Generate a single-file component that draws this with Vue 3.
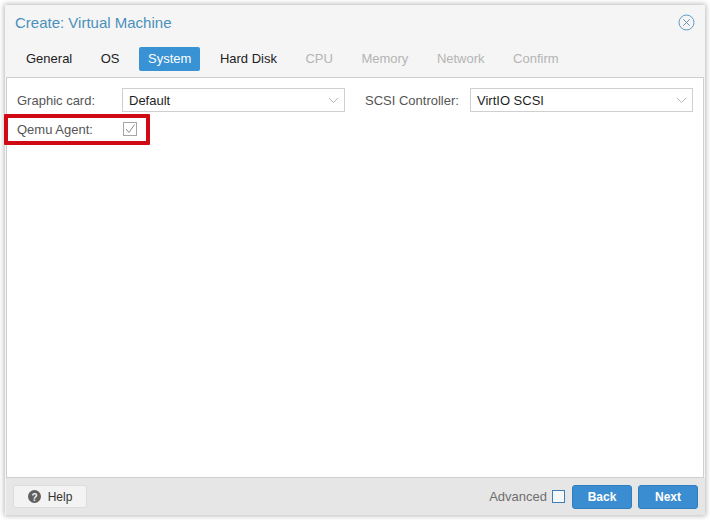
<script setup>
const tabs = [
  { label: 'General' },
  { label: 'OS' },
  { label: 'System', active: true },
  { label: 'Hard Disk' },
  { label: 'CPU', disabled: true },
  { label: 'Memory', disabled: true },
  { label: 'Network', disabled: true },
  { label: 'Confirm', disabled: true }
]
</script>

<template>
  <div class="page">
    <div class="window">
      <header class="head">
        <span class="title">Create: Virtual Machine</span>
        <svg class="close" width="17" height="17" viewBox="0 0 17 17" fill="none" stroke="#5b9bc4" stroke-width="1">
          <circle cx="8.5" cy="8.5" r="7.5" />
          <path d="M5.3 5.3l6.4 6.4M11.7 5.3l-6.4 6.4" stroke="#6f93ad" />
        </svg>
      </header>
      <nav class="tabs">
        <span
          v-for="t in tabs"
          :key="t.label"
          class="tab"
          :class="{ active: t.active, disabled: t.disabled }"
        >{{ t.label }}</span>
      </nav>
      <main class="panel">
        <div class="row">
          <div class="field">
            <label class="lbl">Graphic card:</label>
            <div class="select">
              <span>Default</span>
              <svg width="11" height="7" viewBox="0 0 11 7" fill="none" stroke="#b5b5b5"><path d="M1 1l4.5 4.5L10 1" /></svg>
            </div>
          </div>
          <div class="field">
            <label class="lbl">SCSI Controller:</label>
            <div class="select">
              <span>VirtIO SCSI</span>
              <svg width="11" height="7" viewBox="0 0 11 7" fill="none" stroke="#b5b5b5"><path d="M1 1l4.5 4.5L10 1" /></svg>
            </div>
          </div>
        </div>
        <div class="agent">
          <label class="lbl">Qemu Agent:</label>
          <span class="check">
            <svg width="12" height="12" viewBox="0 0 12 12" fill="none" stroke="#8f8f8f" stroke-width="1"><path d="M2 6l3 3.5 5.5-8" /></svg>
          </span>
        </div>
      </main>
      <footer class="foot">
        <button class="help">
          <svg width="13" height="13" viewBox="0 0 13 13">
            <circle cx="6.5" cy="6.5" r="6.5" fill="#5f5f5f" />
            <text x="6.5" y="10.5" text-anchor="middle" font-size="10" font-weight="700" font-family="Liberation Sans, sans-serif" fill="#f5f5f5">?</text>
          </svg>
          Help
        </button>
        <span class="adv">Advanced</span>
        <span class="advbox"></span>
        <button class="primary">Back</button>
        <button class="primary">Next</button>
      </footer>
    </div>
    <div class="mark"></div>
  </div>
</template>

<style scoped>
.page {
  position: relative;
  width: 710px;
  height: 520px;
  box-sizing: border-box;
  padding: 5px;
  background: #fff;
  font-family: "Liberation Sans", Arial, sans-serif;
  font-size: 13px;
  color: #1f1f1f;
  overflow: hidden;
}
.window {
  height: 510px;
  display: flex;
  flex-direction: column;
  box-sizing: border-box;
  padding-left: 1px;
  background: #f5f5f5;
  box-shadow: 0 0 5px 1px rgba(0, 0, 0, 0.28);
}
.head {
  height: 36px;
  display: flex;
  align-items: center;
  justify-content: space-between;
  padding: 0 10px 1px 9px;
  box-sizing: border-box;
  flex: none;
}
.title {
  font-size: 15px;
  color: #4a90ba;
}
.tabs {
  height: 36px;
  display: flex;
  align-items: center;
  gap: 10.5px;
  flex: none;
  padding-left: 11px;
  box-sizing: border-box;
}
.tab {
  height: 24px;
  line-height: 24px;
  padding: 0 9px;
  border-radius: 2px;
  flex: none;
  color: #222;
}
.tab.active {
  background: #3892d4;
  color: #fff;
}
.tab.disabled {
  color: #b4b4b4;
}
.panel {
  flex: 1;
  background: #fff;
  border: 1px solid #cfcfcf;
  margin-right: 1px;
  padding: 10px 10px 0 10px;
  box-sizing: border-box;
  min-height: 0;
}
.row {
  display: flex;
  gap: 20px;
}
.field {
  flex: 1;
  display: flex;
  align-items: center;
}
.lbl {
  width: 105px;
  color: #555;
  flex: none;
}
.select {
  flex: 1;
  height: 24px;
  border: 1px solid #cfcfcf;
  box-sizing: border-box;
  display: flex;
  align-items: center;
  justify-content: space-between;
  padding: 0 5px 0 6px;
  color: #1f1f1f;
}
.agent {
  display: flex;
  align-items: center;
  height: 24px;
  margin-top: 5px;
}
.check {
  width: 14px;
  height: 14px;
  box-sizing: border-box;
  border: 1px solid #a6a6a6;
  display: block;
  margin-left: 1px;
}
.check svg {
  display: block;
}
.foot {
  height: 37px;
  flex: none;
  background: #e6e6e6;
  display: flex;
  align-items: center;
  padding: 0 7px 0 7px;
  box-sizing: border-box;
}
button {
  font: inherit;
  border-radius: 3px;
  box-sizing: border-box;
  height: 24px;
  padding: 0;
  cursor: pointer;
}
.help {
  width: 74px;
  height: 23px;
  display: flex;
  align-items: center;
  justify-content: center;
  gap: 7px;
  background: #f3f3f3;
  border: 1px solid #dcdcdc;
  color: #333;
  font-size: 12px;
  margin-right: auto;
}
.adv {
  color: #6e6e6e;
  margin-right: 5px;
}
.advbox {
  width: 13px;
  height: 13px;
  border: 1px solid #3f7fb5;
  box-sizing: border-box;
  background: #f6f9fc;
  margin-right: 7px;
}
.primary {
  width: 60px;
  background: #3a8dd0;
  border: 1px solid #2f7fc0;
  color: #fff;
  font-size: 12px;
  font-weight: 700;
  margin-left: 6px;
}
.advbox + .primary {
  margin-left: 0;
}
.mark {
  position: absolute;
  left: 4px;
  top: 114px;
  width: 146px;
  height: 31px;
  border: 4px solid #cf0a14;
  box-sizing: border-box;
  border-radius: 1px;
}
</style>
